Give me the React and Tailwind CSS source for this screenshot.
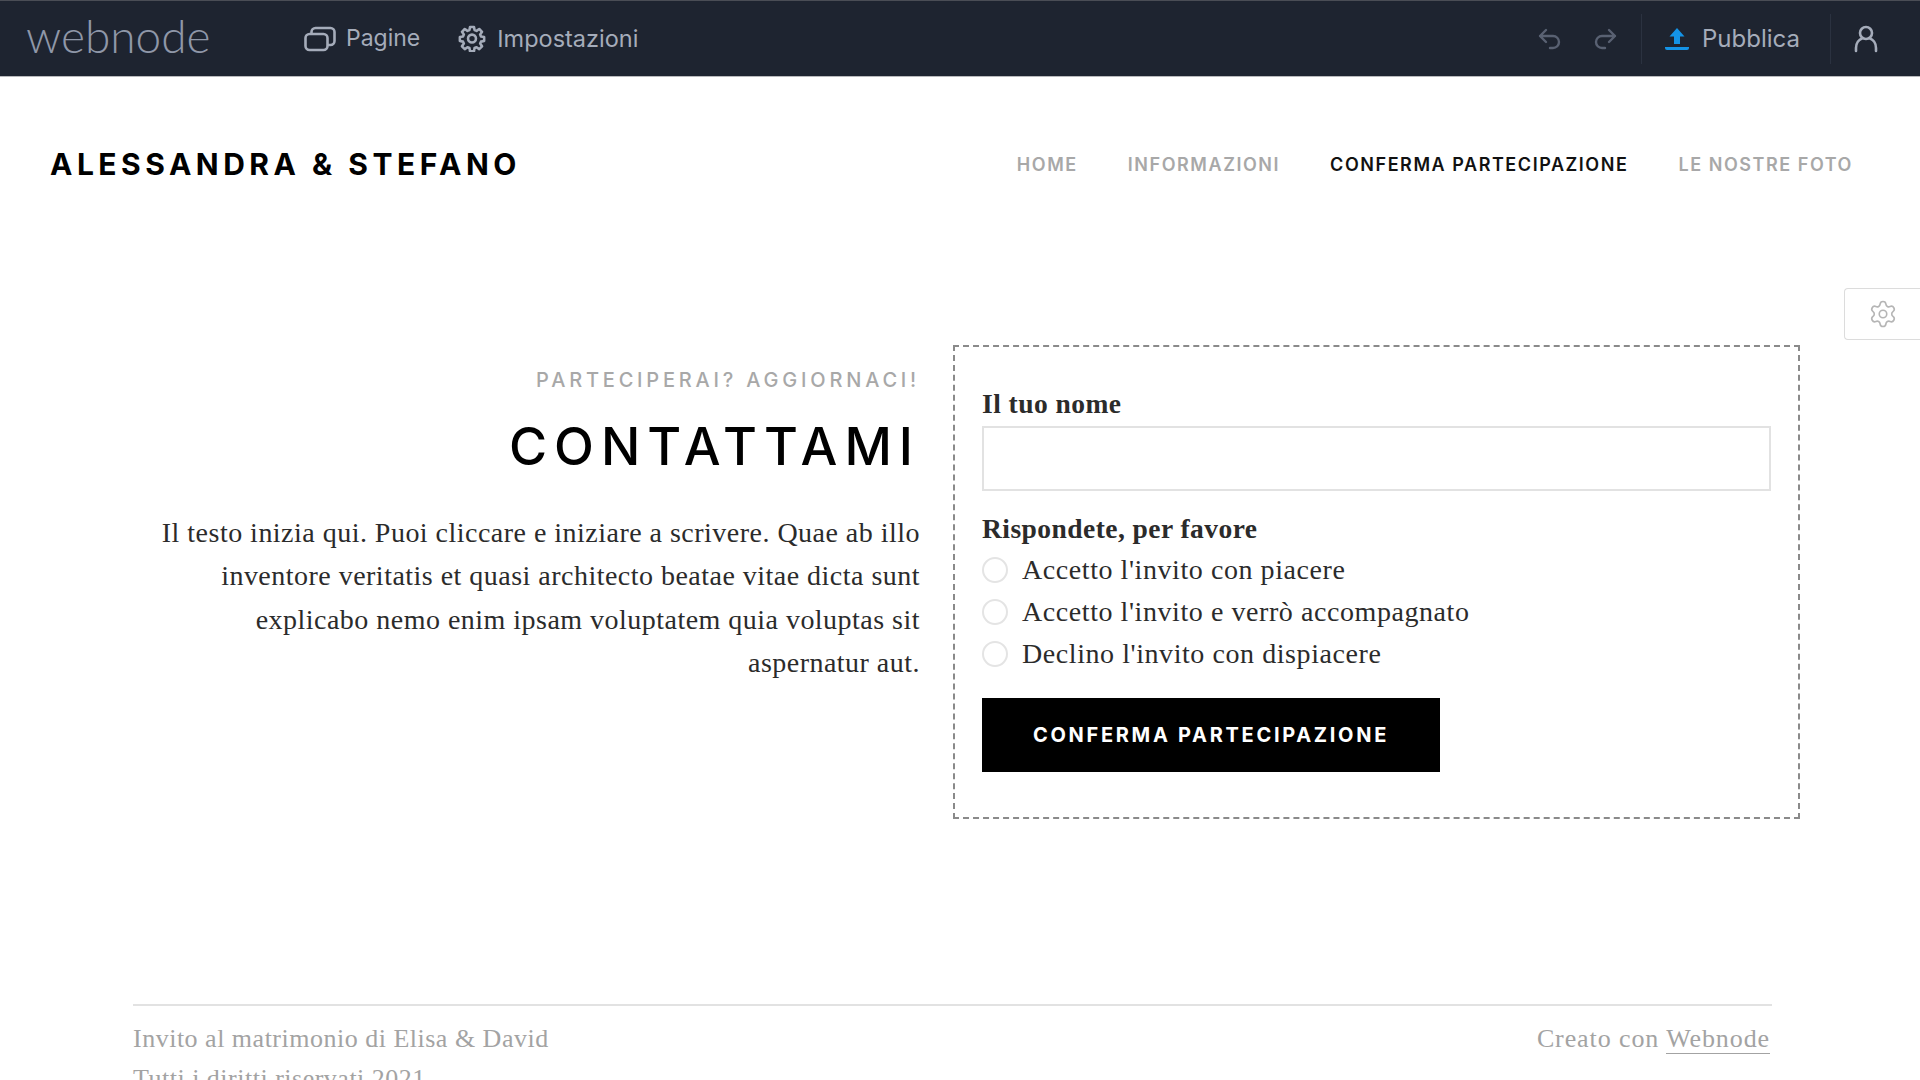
import React from "react";
import { Settings } from "lucide-react";

const serif = "font-['Liberation_Serif',serif]";
const sans = "font-['Inter',sans-serif]";

function Gear({ className, strokeWidth = 1.6 }) {
  return (
    <svg viewBox="0 0 24 24" fill="none" stroke="currentColor" strokeWidth={strokeWidth} strokeLinejoin="round" className={className}>
      <path d="M10.300 2.500h3.400l.5 2.700 1.700.7 2.300-1.600 2.400 2.400-1.600 2.300.7 1.700 2.700.5v3.400l-2.700.5-.7 1.700 1.600 2.300-2.400 2.400-2.300-1.600-1.700.7-.5 2.700h-3.400l-.5-2.700-1.700-.7-2.300 1.600-2.400-2.400 1.600-2.300-.7-1.700-2.700-.5v-3.400l2.700-.5.7-1.700-1.600-2.300 2.400-2.400 2.300 1.600 1.700-.7z" />
      <circle cx="12" cy="12.500" r="3.400" />
    </svg>
  );
}

function Radio({ label }) {
  return (
    <div className="flex items-center h-[42px]">
      <span className="w-[26px] h-[26px] rounded-full border-2 border-[#e4e4e4] bg-white shrink-0" />
      <span className={`${serif} ml-[14px] text-[28px] tracking-[0.57px] text-[#2b2b2b]`}>{label}</span>
    </div>
  );
}

export default function App() {
  return (
    <div className="w-[1920px] h-[1080px] overflow-hidden bg-white flex flex-col relative">
      <header className="h-[77px] shrink-0 bg-[#1e2430] border-t border-t-[#4a4d55] border-b border-b-[#b8b9bc] flex items-center text-[#a5acba]">
        <span className="ml-[26px] w-[278px] font-['Lato',sans-serif] font-light text-[46px] leading-none text-[#8f97a8] -mt-[6px]">webnode</span>
        <svg viewBox="0 0 32 26" className="w-[32px] h-[26px] text-[#a5acba]" fill="none" stroke="currentColor" strokeWidth="2.6" strokeLinejoin="round">
          <rect x="1.5" y="8" width="22" height="16" rx="4" />
          <path d="M7.500 8V6a4 4 0 0 1 4-4h15a4 4 0 0 1 4 4v9a4 4 0 0 1-4 4h-3" />
        </svg>
        <span className={`${sans} ml-[10px] text-[23px] text-[#a5acba]`}>Pagine</span>
        <Gear className="ml-[38px] w-[28px] h-[28px] -mt-[2px] text-[#a5acba]" strokeWidth={2.2} />
        <span className={`${sans} ml-[11px] text-[23.500px] text-[#a5acba]`}>Impostazioni</span>
        <div className="flex-1" />
        <svg viewBox="0 0 24 22" className="w-[24px] h-[22px] text-[#596172]" fill="none" stroke="currentColor" strokeWidth="2.4" strokeLinecap="round" strokeLinejoin="round">
          <path d="M8 2 2 8l6 6M2 8h13a6 6 0 0 1 0 12h-3" />
        </svg>
        <svg viewBox="0 0 24 22" className="ml-[31px] w-[24px] h-[22px] text-[#596172]" fill="none" stroke="currentColor" strokeWidth="2.4" strokeLinecap="round" strokeLinejoin="round">
          <path d="m16 2 6 6-6 6M22 8H9a6 6 0 0 0 0 12h3" />
        </svg>
        <div className="ml-[24px] w-px h-[50px] bg-[#2b3240]" />
        <svg viewBox="0 0 26 22" className="ml-[22px] w-[26px] h-[22px] text-[#1493e6]" fill="currentColor">
          <path d="M13 0l7.500 8.500H16V16h-6V8.500H5.500z" />
          <path d="M1 19h24v1a2 2 0 0 1-2 2H3a2 2 0 0 1-2-2z" />
        </svg>
        <span className={`${sans} ml-[12px] text-[24px] text-[#a5acba]`}>Pubblica</span>
        <div className="ml-[30px] w-px h-[50px] bg-[#2b3240]" />
        <svg viewBox="0 0 24 28" className="ml-[23px] mr-[42px] w-[24px] h-[28px] text-[#a5acba]" fill="none" stroke="currentColor" strokeWidth="2.6" strokeLinecap="round">
          <circle cx="12" cy="8" r="6" />
          <path d="M2 26v-3c0-5 3-8.500 6-9.500M22 26v-3c0-5-3-8.500-6-9.500" />
        </svg>
      </header>

      <nav className="h-[174px] shrink-0 flex items-center pl-[50px] pr-[67px]">
        <span className={`${sans} font-bold text-[30px] tracking-[4.500px] text-black`}>ALESSANDRA &amp; STEFANO</span>
        <div className={`${sans} ml-auto flex gap-[50px] text-[18px] font-semibold tracking-[1.550px] text-[#a8a8a8]`}>
          <span>HOME</span>
          <span>INFORMAZIONI</span>
          <span className="text-[#111]">CONFERMA PARTECIPAZIONE</span>
          <span>LE NOSTRE FOTO</span>
        </div>
      </nav>

      <main className="flex items-start pt-[94px] h-[753px] shrink-0">
        <section className="w-[920px] shrink-0 text-right pt-[14px]">
          <div className={`${sans} text-[20px] font-medium tracking-[3.800px] leading-[42px] text-[#a8a8a8]`}>PARTECIPERAI? AGGIORNACI!</div>
          <h1 className={`${sans} mt-[14px] text-[52px] font-medium tracking-[7px] leading-[64px] text-black`}>CONTATTAMI</h1>
          <p className={`${serif} mt-[32px] ml-[130px] text-[28px] tracking-[0.48px] leading-[43.400px] text-[#2b2b2b]`}>
            Il testo inizia qui. Puoi cliccare e iniziare a scrivere. Quae ab illo inventore veritatis et quasi architecto beatae vitae dicta sunt explicabo nemo enim ipsam voluptatem quia voluptas sit aspernatur aut.
          </p>
        </section>
        <section className="ml-[33px] w-[847px] h-[474px] shrink-0 border-2 border-dashed border-[#8a8a8a] px-[27px] pt-[40px]">
          <label className={`${serif} block font-bold text-[27.500px] tracking-[0.45px] leading-[34px] text-[#2b2b2b]`}>Il tuo nome</label>
          <div className="mt-[5px] h-[65px] border-2 border-[#e2e2e2] bg-white" />
          <label className={`${serif} block mt-[21px] font-bold text-[27.500px] tracking-[0.45px] leading-[34px] text-[#2b2b2b]`}>Rispondete, per favore</label>
          <div className="mt-[3px] flex flex-col">
            <Radio label="Accetto l'invito con piacere" />
            <Radio label="Accetto l'invito e verrò accompagnato" />
            <Radio label="Declino l'invito con dispiacere" />
          </div>
          <button className={`${sans} mt-[23px] w-[458px] h-[74px] bg-black text-white text-[20px] font-bold tracking-[2.700px]`}>CONFERMA PARTECIPAZIONE</button>
        </section>
      </main>

      <footer className={`${serif} shrink-0 mx-[133px] w-[1639px] border-t-2 border-[#e2e2e2] pt-[13px] pr-[2px] text-[26px] tracking-[0.5px] leading-[40px] text-[#a3a3a3]`}>
        <div className="flex justify-between">
          <span>Invito al matrimonio di Elisa &amp; David</span>
          <span className="tracking-[0.9px]">Creato con <span className="border-b border-[#a3a3a3]">Webnode</span></span>
        </div>
        <div>Tutti i diritti riservati 2021</div>
      </footer>

      <div className="absolute right-0 top-[288px] w-[76px] h-[52px] bg-white border border-r-0 border-[#dcdcdc] rounded-l-[4px] flex items-center pl-[23px] text-[#b5b5b5]">
        <Settings className="w-[30px] h-[30px]" strokeWidth={1.3} />
      </div>
    </div>
  );
}
